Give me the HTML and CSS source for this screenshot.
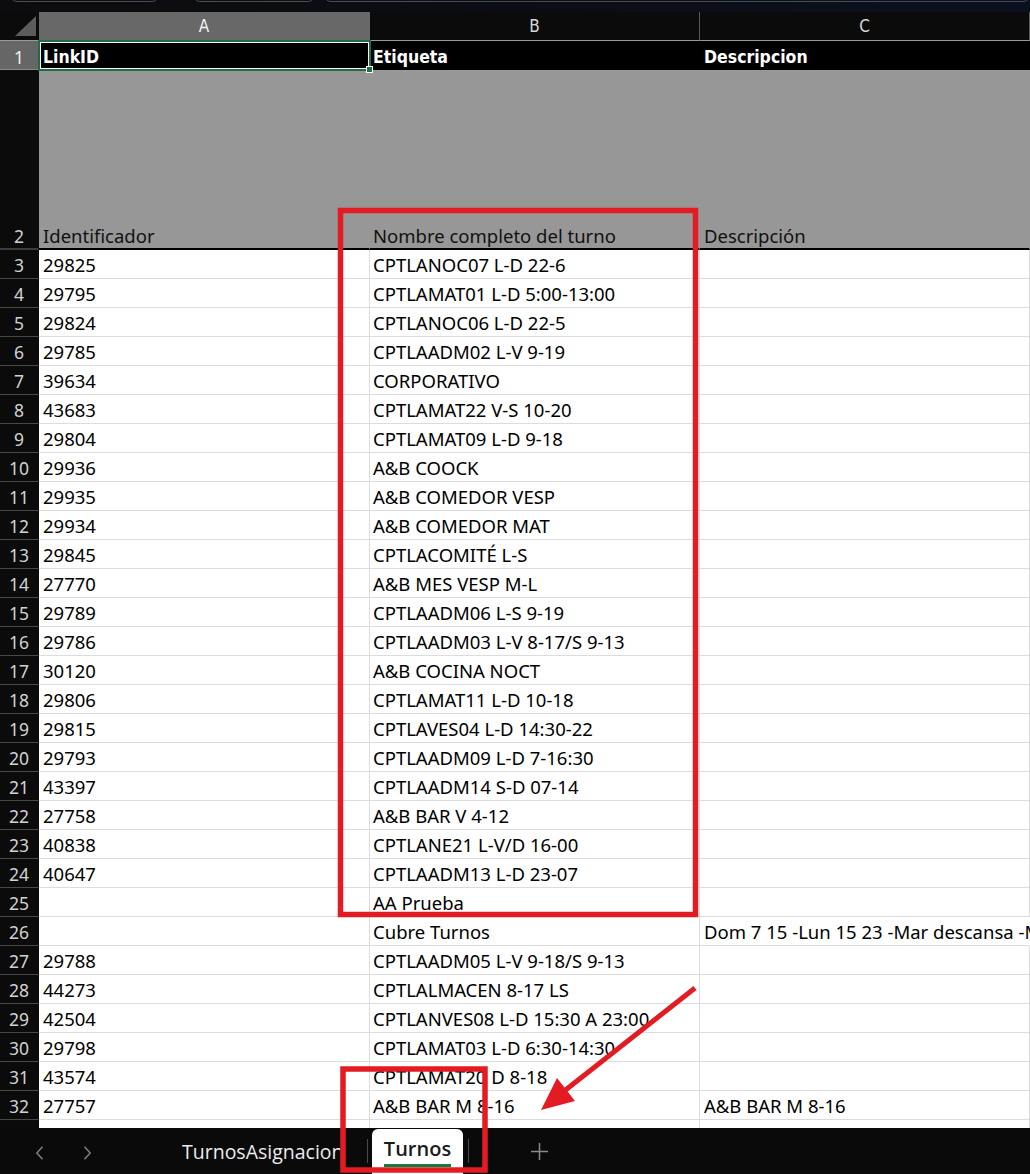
FILE: index.html
```html
<!DOCTYPE html>
<html lang="es">
<head>
<meta charset="utf-8">
<title>Turnos</title>
<link rel="stylesheet" href="styles.css">
</head>
<body>
<div class="app">
  <div class="topbar">
    <span class="pill p1"></span>
    <span class="pill p2"></span>
    <span class="pill p3"></span>
  </div>

  <div class="sheet">
    <div class="row colhead">
      <div class="cell rh corner"></div>
      <div class="cell ca on">A</div>
      <div class="cell cb">B</div>
      <div class="cell cc">C</div>
      <div class="cell cd">D</div>
    </div>

    <div class="row r1">
      <div class="cell rh">1</div>
      <div class="cell ca">LinkID</div>
      <div class="cell cb">Etiqueta</div>
      <div class="cell cc">Descripcion</div>
      <div class="cell cd"></div>
    </div>

    <div class="row r2">
      <div class="cell rh">2</div>
      <div class="cell ca">Identificador</div>
      <div class="cell cb">Nombre completo del turno</div>
      <div class="cell cc">Descripción</div>
      <div class="cell cd"></div>
    </div>

    <div class="row"><div class="cell rh">3</div><div class="cell ca">29825</div><div class="cell cb">CPTLANOC07 L-D 22-6</div><div class="cell cc"></div><div class="cell cd"></div></div>
    <div class="row"><div class="cell rh">4</div><div class="cell ca">29795</div><div class="cell cb">CPTLAMAT01 L-D 5:00-13:00</div><div class="cell cc"></div><div class="cell cd"></div></div>
    <div class="row"><div class="cell rh">5</div><div class="cell ca">29824</div><div class="cell cb">CPTLANOC06 L-D 22-5</div><div class="cell cc"></div><div class="cell cd"></div></div>
    <div class="row"><div class="cell rh">6</div><div class="cell ca">29785</div><div class="cell cb">CPTLAADM02 L-V 9-19</div><div class="cell cc"></div><div class="cell cd"></div></div>
    <div class="row"><div class="cell rh">7</div><div class="cell ca">39634</div><div class="cell cb">CORPORATIVO</div><div class="cell cc"></div><div class="cell cd"></div></div>
    <div class="row"><div class="cell rh">8</div><div class="cell ca">43683</div><div class="cell cb">CPTLAMAT22 V-S 10-20</div><div class="cell cc"></div><div class="cell cd"></div></div>
    <div class="row"><div class="cell rh">9</div><div class="cell ca">29804</div><div class="cell cb">CPTLAMAT09 L-D 9-18</div><div class="cell cc"></div><div class="cell cd"></div></div>
    <div class="row"><div class="cell rh">10</div><div class="cell ca">29936</div><div class="cell cb">A&amp;B COOCK</div><div class="cell cc"></div><div class="cell cd"></div></div>
    <div class="row"><div class="cell rh">11</div><div class="cell ca">29935</div><div class="cell cb">A&amp;B COMEDOR VESP</div><div class="cell cc"></div><div class="cell cd"></div></div>
    <div class="row"><div class="cell rh">12</div><div class="cell ca">29934</div><div class="cell cb">A&amp;B COMEDOR MAT</div><div class="cell cc"></div><div class="cell cd"></div></div>
    <div class="row"><div class="cell rh">13</div><div class="cell ca">29845</div><div class="cell cb">CPTLACOMITÉ L-S</div><div class="cell cc"></div><div class="cell cd"></div></div>
    <div class="row"><div class="cell rh">14</div><div class="cell ca">27770</div><div class="cell cb">A&amp;B MES VESP M-L</div><div class="cell cc"></div><div class="cell cd"></div></div>
    <div class="row"><div class="cell rh">15</div><div class="cell ca">29789</div><div class="cell cb">CPTLAADM06 L-S 9-19</div><div class="cell cc"></div><div class="cell cd"></div></div>
    <div class="row"><div class="cell rh">16</div><div class="cell ca">29786</div><div class="cell cb">CPTLAADM03 L-V 8-17/S 9-13</div><div class="cell cc"></div><div class="cell cd"></div></div>
    <div class="row"><div class="cell rh">17</div><div class="cell ca">30120</div><div class="cell cb">A&amp;B COCINA NOCT</div><div class="cell cc"></div><div class="cell cd"></div></div>
    <div class="row"><div class="cell rh">18</div><div class="cell ca">29806</div><div class="cell cb">CPTLAMAT11 L-D 10-18</div><div class="cell cc"></div><div class="cell cd"></div></div>
    <div class="row"><div class="cell rh">19</div><div class="cell ca">29815</div><div class="cell cb">CPTLAVES04 L-D 14:30-22</div><div class="cell cc"></div><div class="cell cd"></div></div>
    <div class="row"><div class="cell rh">20</div><div class="cell ca">29793</div><div class="cell cb">CPTLAADM09 L-D 7-16:30</div><div class="cell cc"></div><div class="cell cd"></div></div>
    <div class="row"><div class="cell rh">21</div><div class="cell ca">43397</div><div class="cell cb">CPTLAADM14 S-D 07-14</div><div class="cell cc"></div><div class="cell cd"></div></div>
    <div class="row"><div class="cell rh">22</div><div class="cell ca">27758</div><div class="cell cb">A&amp;B BAR V 4-12</div><div class="cell cc"></div><div class="cell cd"></div></div>
    <div class="row"><div class="cell rh">23</div><div class="cell ca">40838</div><div class="cell cb">CPTLANE21 L-V/D 16-00</div><div class="cell cc"></div><div class="cell cd"></div></div>
    <div class="row"><div class="cell rh">24</div><div class="cell ca">40647</div><div class="cell cb">CPTLAADM13 L-D 23-07</div><div class="cell cc"></div><div class="cell cd"></div></div>
    <div class="row"><div class="cell rh">25</div><div class="cell ca"></div><div class="cell cb">AA Prueba</div><div class="cell cc"></div><div class="cell cd"></div></div>
    <div class="row"><div class="cell rh">26</div><div class="cell ca"></div><div class="cell cb">Cubre Turnos</div><div class="cell cc spill">Dom 7 15 -Lun 15 23 -Mar descansa -Mie 7 15</div><div class="cell cd"></div></div>
    <div class="row"><div class="cell rh">27</div><div class="cell ca">29788</div><div class="cell cb">CPTLAADM05 L-V 9-18/S 9-13</div><div class="cell cc"></div><div class="cell cd"></div></div>
    <div class="row"><div class="cell rh">28</div><div class="cell ca">44273</div><div class="cell cb">CPTLALMACEN 8-17 LS</div><div class="cell cc"></div><div class="cell cd"></div></div>
    <div class="row"><div class="cell rh">29</div><div class="cell ca">42504</div><div class="cell cb">CPTLANVES08 L-D 15:30 A 23:00</div><div class="cell cc"></div><div class="cell cd"></div></div>
    <div class="row"><div class="cell rh">30</div><div class="cell ca">29798</div><div class="cell cb">CPTLAMAT03 L-D 6:30-14:30</div><div class="cell cc"></div><div class="cell cd"></div></div>
    <div class="row"><div class="cell rh">31</div><div class="cell ca">43574</div><div class="cell cb">CPTLAMAT20 D 8-18</div><div class="cell cc"></div><div class="cell cd"></div></div>
    <div class="row"><div class="cell rh">32</div><div class="cell ca">27757</div><div class="cell cb">A&amp;B BAR M 8-16</div><div class="cell cc">A&amp;B BAR M 8-16</div><div class="cell cd"></div></div>
    <div class="row"><div class="cell rh">33</div><div class="cell ca">29797</div><div class="cell cb">CPTLAMAT04 L-D 6-14</div><div class="cell cc"></div><div class="cell cd"></div></div>

    <div class="selbox"><span class="handle"></span></div>
  </div>

  <div class="tabbar">
    <svg class="chev chev-l" width="9" height="14" viewBox="0 0 9 14"><path d="M7.5 0.8 L1.8 7 L7.5 13.2"/></svg>
    <svg class="chev chev-r" width="9" height="14" viewBox="0 0 9 14"><path d="M1.5 0.8 L7.2 7 L1.5 13.2"/></svg>
    <div class="othertab">TurnosAsignacion</div>
    <span class="sep sep-a"></span>
    <div class="active"><span class="tabname">Turnos</span></div>
    <span class="sep sep-b"></span>
    <svg class="plus" width="17" height="17" viewBox="0 0 17 17"><path d="M8.5 0 V17 M0 8.5 H17"/></svg>
  </div>
</div>

<svg class="marks" width="1030" height="1174" viewBox="0 0 1030 1174">
  <rect x="340.5" y="210.5" width="355" height="704"/>
  <rect x="343" y="1069" width="142" height="101"/>
  <line x1="695" y1="988" x2="563" y2="1092"/>
  <polygon points="541,1110 557,1078 575,1101"/>
</svg>
</body>
</html>
```

FILE: styles.css
```css
* { box-sizing: border-box; }

html, body {
  margin: 0;
  padding: 0;
}

body {
  position: relative;
  width: 1030px;
  height: 1174px;
  overflow: hidden;
  background: #0a0a0a;
  font-family: "Noto Sans", "Open Sans", sans-serif;
}

.app {
  display: flex;
  flex-direction: column;
  height: 1174px;
}

/* window chrome strip above the grid */
.topbar {
  flex: none;
  height: 12px;
  display: flex;
  overflow: hidden;
  background: linear-gradient(90deg, #0c0c0e 0%, #0c0d12 35%, #0b1020 100%);
}

.pill {
  height: 14px;
  margin-top: -12px;
  border: 1px solid #4c4d52;
  border-radius: 0 0 7px 7px;
}
.p1 { margin-left: 10px; width: 152px; }
.p2 { margin-left: 34px; width: 125px; }
.p3 { margin-left: 9px; width: 720px; }

/* grid */
.sheet {
  position: relative;
  flex: 1;
  overflow: hidden;
  background: #fff;
}

.row {
  display: flex;
  height: 29px;
}

.cell {
  flex: none;
  display: flex;
  align-items: flex-end;
  padding: 0 3px 3px 3px;
  border-right: 1px solid #dcdcdc;
  border-bottom: 1px solid #dcdcdc;
  white-space: nowrap;
  overflow: hidden;
  font-size: 18.5px;
  line-height: 20px;
  color: #000;
}

.rh {
  width: 39px;
  justify-content: center;
  padding: 0 0 3px 0;
  background: #0b0b0b;
  color: #d2d2d2;
  border-right-color: #0b0b0b;
  border-bottom-color: #484848;
  font-size: 17.5px;
}

.ca { width: 331px; padding-left: 4px; }
.cb { width: 330px; }
.cc { width: 330px; padding-left: 4px; }
.cd { width: 120px; }

/* column letters */
.colhead .cell {
  align-items: center;
  justify-content: center;
  padding: 0;
  background: #0b0b0b;
  color: #d8d8d8;
  border-right-color: #585858;
  border-bottom-color: #9a9a9a;
  font-family: "DejaVu Sans Condensed", "DejaVu Sans", sans-serif;
  font-stretch: condensed;
  font-size: 17px;
}
.colhead .on {
  background: #686868;
  color: #f4f4f4;
  border-right-color: #686868;
}
.colhead .corner {
  position: relative;
  border-right-color: #0b0b0b;
}
.colhead .corner::after {
  content: "";
  position: absolute;
  right: 2px;
  bottom: 4px;
  width: 21px;
  height: 20px;
  background: #5c5c5c;
  clip-path: polygon(100% 0, 100% 100%, 0 100%);
}

/* header row 1 */
.r1 .cell {
  background: #000;
  color: #fff;
  border-color: #000;
  font-family: "DejaVu Sans Condensed", "DejaVu Sans", sans-serif;
  font-stretch: condensed;
  font-weight: bold;
  font-size: 17.5px;
  padding-bottom: 2px;
}
.r1 .rh {
  background: #666;
  color: #eee;
  font-weight: normal;
  font-family: "Noto Sans", sans-serif;
  font-stretch: normal;
  border-color: #666;
  border-bottom-color: #8a8a8a;
}

/* header row 2 */
.r2 { height: 180px; }
.r2 .cell {
  background: #979797;
  color: #111;
  border-right-color: #979797;
  border-bottom: 2px solid #000;
  padding-bottom: 2px;
}
.r2 .rh {
  background: #0b0b0b;
  color: #d2d2d2;
  border-right-color: #0b0b0b;
  border-bottom: 2px solid #3c3c3c;
}

/* long text running into the next column */
.spill {
  position: relative;
  z-index: 1;
  overflow: visible;
  border-right-color: #fff;
}

/* active cell outline */
.selbox {
  position: absolute;
  top: 28px;
  left: 38px;
  width: 333px;
  height: 31px;
  border: 2px solid #1f6f43;
  box-shadow: inset 0 0 0 1px #fff;
}
.handle {
  position: absolute;
  right: -4px;
  bottom: -4px;
  width: 7px;
  height: 7px;
  background: #1f6f43;
  border: 1px solid #fff;
}

/* sheet tabs */
.tabbar {
  position: relative;
  z-index: 2;
  flex: none;
  height: 46px;
  display: flex;
  align-items: flex-start;
  padding-left: 35px;
  background: #0a0a0a;
  font-family: "Open Sans", "Noto Sans", sans-serif;
}

.chev {
  margin-top: 18px;
  fill: none;
  stroke: #7f7f7f;
  stroke-width: 1.5;
}
.chev-r { margin-left: 39px; }

.othertab {
  margin-left: 90px;
  margin-top: 10px;
  width: 158px;
  overflow: hidden;
  white-space: nowrap;
  color: #ececec;
  font-size: 19.5px;
  line-height: 28px;
}

.sep {
  width: 1px;
  height: 24px;
  margin-top: 11px;
  background: #4a4a4a;
}
.sep-a { margin-left: 27px; }
.sep-b { margin-left: 5px; }

.active {
  width: 91px;
  height: 45px;
  margin-top: 1px;
  margin-left: 4px;
  background: #fff;
  border-radius: 6px 6px 0 0;
  display: flex;
  justify-content: center;
  padding-top: 8px;
}
.tabname {
  display: inline-block;
  height: 30px;
  color: #1b1b1b;
  font-size: 20px;
  font-weight: 600;
  line-height: 24px;
  border-bottom: 3px solid #107c41;
}

.plus {
  margin-left: 62px;
  margin-top: 15px;
  fill: none;
  stroke: #8a8a8a;
  stroke-width: 1.5;
}

/* red call-outs */
.marks {
  position: absolute;
  top: 0;
  left: 0;
  z-index: 5;
  pointer-events: none;
}
.marks rect {
  fill: none;
  stroke: #e31c23;
  stroke-width: 5.5;
}
.marks line {
  stroke: #e31c23;
  stroke-width: 5;
}
.marks polygon {
  fill: #e31c23;
}
```
